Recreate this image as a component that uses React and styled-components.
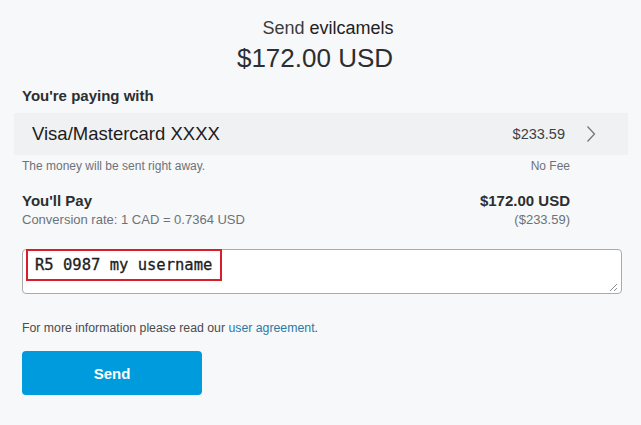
import React from 'react';
import styled, { createGlobalStyle } from 'styled-components';

const Global = createGlobalStyle`
    html, body {
        margin: 0;
        padding: 0;
        background: #f7f8fa;
    }
    body {
        font-family: "Liberation Sans", Arial, sans-serif;
        color: #2c2e2f;
    }
`;

const Page = styled.div`
    width: 641px;
    height: 425px;
    box-sizing: border-box;
    padding: 17px 19px 0 22px;
    display: flex;
    flex-direction: column;
`;

const Header = styled.div`
    display: flex;
    flex-direction: column;
    align-items: center;
`;

const Title = styled.div`
    padding-left: 12px;
    font-size: 18px;
    line-height: 22px;
    color: #3a3c3e;
    span {
        color: #222;
    }
`;

const Amount = styled.div`
    margin-top: 3px;
    padding-right: 14px;
    font-size: 26px;
    line-height: 32px;
    color: #2c2e2f;
`;

const Label = styled.div`
    margin-top: ${p => p.$top || 0}px;
    font-size: 15px;
    line-height: 18px;
    font-weight: bold;
    color: #2c2e2f;
`;

const Card = styled.div`
    margin: 8px -6px 0 -8px;
    height: 42px;
    padding: 0 32px 0 18px;
    background: #f0f1f3;
    display: flex;
    align-items: center;
    font-size: 18.5px;
    color: #1c1c1c;
`;

const CardName = styled.div`
    flex: 1;
`;

const CardPrice = styled.div`
    font-size: 14.5px;
    color: #3d3f41;
    margin-right: 21px;
`;

const Row = styled.div`
    margin-top: ${p => p.$top || 0}px;
    padding-right: 52px;
    display: flex;
    justify-content: space-between;
    align-items: center;
    font-size: ${p => p.$size || 12}px;
    line-height: ${p => (p.$big ? 18 : 16)}px;
    font-weight: ${p => (p.$big ? 'bold' : 'normal')};
    color: ${p => (p.$big ? '#2c2e2f' : '#6c7378')};
`;

const Field = styled.div`
    margin-top: 21px;
    height: 45px;
    box-sizing: border-box;
    border: 1px solid #a9abae;
    border-radius: 4px;
    background: #fff;
    padding: 0 3px 1px 3px;
    display: flex;
    align-items: flex-start;
    justify-content: space-between;
`;

const Highlight = styled.span`
    margin-top: -1px;
    border: 2px solid #d81e2a;
    padding: 3px 8px 3px 7px;
    font-family: "DejaVu Sans Mono", monospace;
    font-size: 15.5px;
    line-height: 22px;
    color: #1e1e1e;
    -webkit-text-stroke: 0.3px #1e1e1e;
`;

const Grip = styled.svg`
    align-self: flex-end;
`;

const Note = styled.div`
    margin-top: 26px;
    font-size: 12.3px;
    line-height: 16px;
    color: #4a4c4e;
    a {
        color: #2a7aa8;
        text-decoration: none;
    }
`;

const Button = styled.button`
    margin-top: 15px;
    width: 180px;
    height: 44px;
    border: none;
    border-radius: 4px;
    background: #009bdc;
    color: #fff;
    font-family: "Liberation Sans", Arial, sans-serif;
    font-size: 15px;
    font-weight: bold;
    cursor: pointer;
`;

const Chevron = () => (
    <svg width="10" height="18" viewBox="0 0 10 18">
        <path d="M1.5 1.5 L8.5 9 L1.5 16.5" fill="none" stroke="#6c7378" strokeWidth="1.2" />
    </svg>
);

const App = () => {
    return (
        <Page>
            <Global />
            <Header>
                <Title>Send <span>evilcamels</span></Title>
                <Amount>$172.00 USD</Amount>
            </Header>
            <Label $top={13}>You're paying with</Label>
            <Card>
                <CardName>Visa/Mastercard XXXX</CardName>
                <CardPrice>$233.59</CardPrice>
                <Chevron />
            </Card>
            <Row $top={3}>
                <span>The money will be sent right away.</span>
                <span>No Fee</span>
            </Row>
            <Row $top={18} $big $size={15}>
                <span>You'll Pay</span>
                <span>$172.00 USD</span>
            </Row>
            <Row $top={2} $size={13}>
                <span>Conversion rate: 1 CAD = 0.7364 USD</span>
                <span>($233.59)</span>
            </Row>
            <Field>
                <Highlight>R5 0987 my username</Highlight>
                <Grip width="9" height="9" viewBox="0 0 9 9">
                    <path d="M8 1 L1 8 M8 5 L5 8" stroke="#8a8c8e" strokeWidth="1" />
                </Grip>
            </Field>
            <Note>For more information please read our <a href="#">user agreement</a>.</Note>
            <Button>Send</Button>
        </Page>
    );
};

export default App;
